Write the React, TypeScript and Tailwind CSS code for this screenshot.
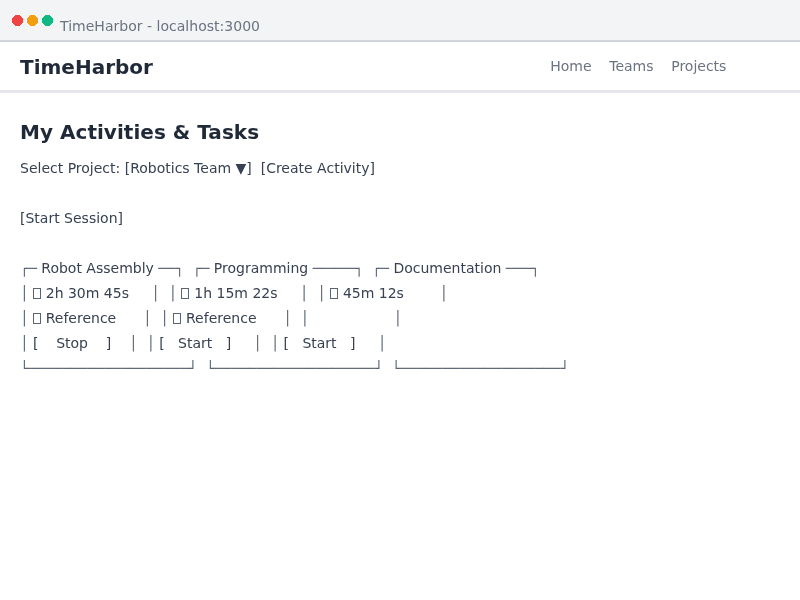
const links = ["Home", "Teams", "Projects"];

const lines = [
  "Select Project: [Robotics Team ▼]  [Create Activity]",
  "",
  "[Start Session]",
  "",
  "┌─ Robot Assembly ──┐  ┌─ Programming ─────┐  ┌─ Documentation ───┐",
  "│ □ 2h 30m 45s     │  │ □ 1h 15m 22s     │  │ □ 45m 12s        │",
  "│ □ Reference      │  │ □ Reference      │  │                   │",
  "│ [    Stop    ]    │  │ [   Start   ]     │  │ [   Start   ]     │",
  "└───────────────────┘  └───────────────────┘  └───────────────────┘",
];

// Splits a line into plain text, frame strokes and icon placeholders.
function Line({ text }: { text: string }) {
  return (
    <div className="h-[25px] whitespace-pre">
      {text.split(/([┌┐└┘─│]+|□)/).map((part, i) => {
        if (part === "□") {
          return (
            <span key={i} className="inline-block w-[8.4px] leading-none">
              <span className="-mb-px block h-[11px] w-[8px] border border-[#5b6472]" />
            </span>
          );
        }
        if (/^[┌┐└┘─│]/.test(part)) {
          return <span key={i} className="text-[#5b6472]">{part}</span>;
        }
        return part;
      })}
    </div>
  );
}

function Dot({ color }: { color: string }) {
  return (
    <svg width="11" height="11" viewBox="0 0 11 11" shapeRendering="crispEdges" fill={color}>
      <path d="M3 0h5v1h1v1h1v1h1v5h-1v1h-1v1h-1v1H3v-1H2V9H1V8H0V3h1V2h1V1h1z" />
    </svg>
  );
}

export default function App() {
  return (
    <div className="h-[600px] w-[800px] overflow-hidden font-['DejaVu_Sans',sans-serif] text-[14px] text-[#374151] will-change-transform">
      <div className="flex h-[42px] border-b-2 border-[#d1d5db] bg-[#f3f4f6] pl-3 text-[#6b7280]">
        <div className="flex gap-1 pt-[15px]">
          <Dot color="#ef4444" />
          <Dot color="#f59e0b" />
          <Dot color="#10b981" />
        </div>
        <div className="pt-[18px] pl-[7px] leading-4 tracking-[0.02px]">TimeHarbor - localhost:3000</div>
      </div>
      <header className="flex h-[51px] justify-between border-b-[3px] border-[#e5e7eb] pr-[73.6px] pl-5">
        <div className="pt-[13px] text-[20px] leading-6 font-bold text-[#1f2937]">TimeHarbor</div>
        <nav className="flex gap-[17.7px] pt-4 leading-4 text-[#6b7280]">
          {links.map((l) => <span key={l}>{l}</span>)}
        </nav>
      </header>
      <main className="pt-[27px] pl-5">
        <h1 className="text-[20px] leading-6 font-bold tracking-[0.03px] text-[#1f2937]">My Activities &amp; Tasks</h1>
        <div className="pt-3 leading-[25px]">
          {lines.map((t, i) => <Line key={i} text={t} />)}
        </div>
      </main>
    </div>
  );
}
